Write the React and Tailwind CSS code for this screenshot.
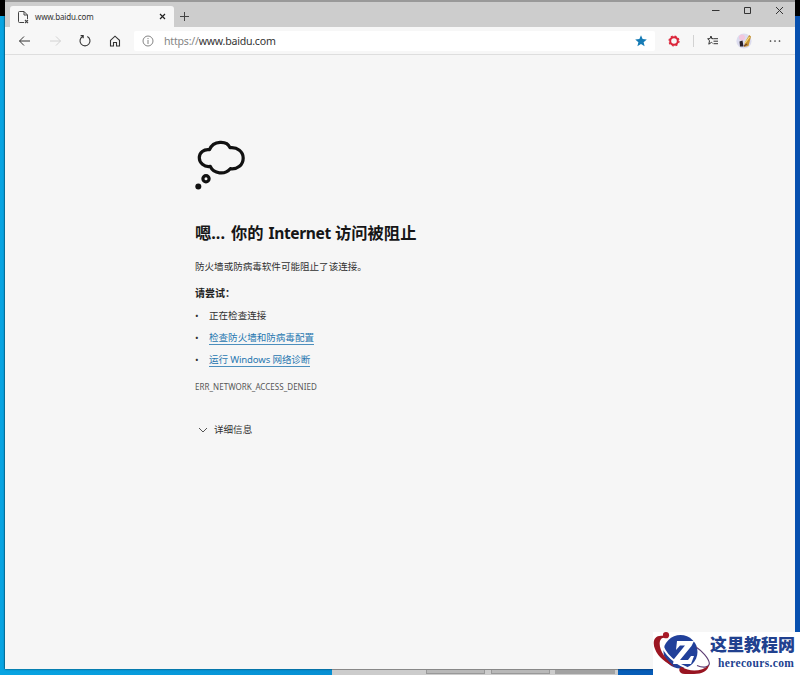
import React from "react";

const Stroke = ({ className, children, viewBox = "0 0 16 16", width = 1 }) => (
  <svg className={className} viewBox={viewBox} fill="none" stroke="currentColor" strokeWidth={width}>
    {children}
  </svg>
);

function TitleBar() {
  return (
    <div className="flex h-[27px] shrink-0 border-t-2 border-[#999] bg-[#cdcdcd] pl-[5px]">
      <div className="mt-[4px] flex h-[21px] w-[164px] items-center rounded-t-[3px] bg-[#f7f7f7]">
        <Stroke className="ml-[6px] h-[14px] w-[14px] text-[#444]" viewBox="0 0 14 14">
          <path d="M8 12.5H3.5Q2.5 12.5 2.5 11.5V2.5Q2.5 1.5 3.5 1.5H8L11.5 5V9M8 1.5V5H11.5" />
          <path d="M9 10L12 13M12 10L9 13" strokeWidth="1.1" />
        </Stroke>
        <span className="ml-[5px] w-[128px] text-[8px] leading-[12px] tracking-[-0.14px] text-[#333]">www.baidu.com</span>
        <Stroke className="-ml-[4px] h-[7px] w-[7px] shrink-0 text-[#222]" viewBox="0 0 7 7" width={1.2}>
          <path d="M1 1L6 6M6 1L1 6" />
        </Stroke>
      </div>
      <Stroke className="ml-[6px] mt-[10px] h-[10px] w-[10px] text-[#444]" viewBox="0 0 10 10">
        <path d="M4.5 0V9M0 4.5H9" />
      </Stroke>
      <div className="ml-auto flex gap-[23px] pr-[11px] pt-[4px] text-[#333]">
        <Stroke className="h-[9px] w-[9px]" viewBox="0 0 9 9"><path d="M1 4.5H8.5" /></Stroke>
        <Stroke className="h-[9px] w-[9px]" viewBox="0 0 9 9"><path d="M1.5 1.5H7.5V7.5H1.5Z" /></Stroke>
        <Stroke className="h-[9px] w-[9px]" viewBox="0 0 9 9"><path d="M1 1L8 8M8 1L1 8" /></Stroke>
      </div>
    </div>
  );
}

function Toolbar() {
  return (
    <div className="flex h-[28px] shrink-0 items-center border-b border-[#dedede] bg-[#f7f7f7] pl-[13px] text-[#333]">
      <Stroke className="h-[12px] w-[13px]" viewBox="0 0 13 12"><path d="M12 6H1.5M6 1.5L1.5 6L6 10.5" /></Stroke>
      <Stroke className="ml-[18px] h-[12px] w-[13px] text-[#d2d2d2]" viewBox="0 0 13 12"><path d="M1 6H11.5M7 1.5L11.5 6L7 10.5" /></Stroke>
      <Stroke className="ml-[16px] h-[14px] w-[14px]" viewBox="0 0 14 14" width={1.1}>
        <path d="M9.3 2.4A5 5 0 1 1 4.7 2.4M2.6 1.6H5.2V4.2" />
      </Stroke>
      <Stroke className="ml-[17px] h-[12px] w-[12px]" viewBox="0 0 12 12" width={1.1}>
        <path d="M1.5 5.3L6 1.2L10.5 5.3V11H7.5V7.5H4.5V11H1.5Z" />
      </Stroke>
      <div className="ml-[13px] flex h-[20px] w-[521px] items-center rounded-[2px] bg-white">
        <Stroke className="ml-[8px] h-[12px] w-[12px] text-[#777]" viewBox="0 0 12 12" width={0.9}>
          <circle cx="6" cy="6" r="5" /><path d="M6 5V9M6 3V4.1" />
        </Stroke>
        <span className="ml-[10px] text-[10.6px] leading-[14px] tracking-[-0.23px] text-[#858585]">
          https://<span className="text-[#333]">www.baidu.com</span>
        </span>
        <svg className="ml-auto mr-[8px] h-[12px] w-[12px]" viewBox="0 0 12 12">
          <path fill="#167bb5" d="M6 0.3L7.6 4.1L11.8 4.5L8.6 7.2L9.6 11.3L6 9.1L2.4 11.3L3.4 7.2L0.2 4.5L4.4 4.1Z" />
        </svg>
      </div>
      <svg className="ml-[13px] h-[12px] w-[12px]" viewBox="0 0 12 12" fill="none" stroke="#db2439">
        <circle cx="6" cy="6" r="3.8" strokeWidth="2" />
        <circle cx="6" cy="6" r="5" strokeWidth="1.2" strokeDasharray="2 1.93" />
      </svg>
      <div className="ml-[13px] h-[12px] w-px bg-[#d2d2d2]" />
      <Stroke className="ml-[13px] h-[11px] w-[12px]" viewBox="0 0 12 11">
        <path d="M6.5 3.7H4.8L3.9 1.2L3 3.7H0.7L2.5 5.8L1.8 9.2L4.4 7.4L5.6 8.2M6.5 3.7H11M6.5 6.2H11M6.5 8.7H11" />
        <path d="M3.9 1.2L5.2 3.7" />
      </Stroke>
      <svg className="ml-[17px] h-[16px] w-[16px]" viewBox="0 0 16 16">
        <circle cx="8" cy="8" r="7.6" fill="#dcdcef" />
        <circle cx="6" cy="4.5" r="3" fill="#f1c7de" />
        <path d="M3.5 8.5L6.5 7.5L7.5 13.5H4Z" fill="#26202c" />
        <path d="M8 14L9 9L13.2 2L15 3.5L12.5 13Z" fill="#c69332" />
        <path d="M9 10L13.5 4" stroke="#f7df80" strokeWidth="1.2" />
        <path d="M8 13L11 11" stroke="#76472b" strokeWidth="1.5" />
      </svg>
      <svg className="ml-[17px] h-[4px] w-[12px]" viewBox="0 0 12 4" fill="#333">
        <circle cx="1.5" cy="2" r=".85" /><circle cx="6" cy="2" r=".85" /><circle cx="10.5" cy="2" r=".85" />
      </svg>
    </div>
  );
}

function ErrorPage() {
  return (
    <main className="flex flex-1 flex-col items-start bg-[#f6f6f6] pl-[190px] pt-[84px] text-[9.55px] text-[#303030]">
      <svg className="h-[52px] w-[52px]" viewBox="0 0 52 52" fill="none" stroke="#111" strokeWidth="3.2">
        <path d="M14.5 10.7C18.2 1.2 32 1.2 35 8.7C42.5 7.8 48.2 12.8 48.2 18.9C48.2 26 42.5 30.5 35.3 29.7C30 36.1 18.5 35 15.3 27.4C9 28.3 4.3 23.8 4.3 18.8C4.3 13.5 8.8 9.9 14.5 10.7Z" strokeLinejoin="round" />
        <circle cx="11" cy="39.8" r="3.1" />
        <circle cx="3.3" cy="47.5" r="3" fill="#111" stroke="none" />
      </svg>
      <h1 className="mt-[30px] flex h-[24px] whitespace-nowrap text-[16.3px] font-bold leading-[24px] text-[#161616]">
        <span className="w-[36px]">嗯...</span>
        <span className="w-[37.5px]">你的</span>
        <span className="w-[66.5px] text-[15.6px] tracking-[-0.38px]">Internet</span>
        <span>访问被阻止</span>
      </h1>
      <p className="mt-[14px] h-[16px] whitespace-nowrap leading-[16px]">防火墙或防病毒软件可能阻止了该连接。</p>
      <h2 className="mt-[10px] h-[16px] text-[10px] font-bold leading-[16px] text-[#222]">请尝试：</h2>
      <ul className="mt-[4px]">
        <li className="flex h-[22px] items-center"><span className="w-[14px]">•</span><span className="leading-[14px]">正在检查连接</span></li>
        <li className="flex h-[22px] items-center"><span className="w-[14px]">•</span><a className="mt-px h-[13px] border-b border-[#4c8fbd] leading-[12px] text-[#2777b0]">检查防火墙和防病毒配置</a></li>
        <li className="flex h-[22px] items-center"><span className="w-[14px]">•</span><a className="mt-px h-[13px] border-b border-[#4c8fbd] leading-[12px] tracking-[-0.12px] text-[#2777b0]">运行 Windows 网络诊断</a></li>
      </ul>
      <p className="mt-[10px] h-[12px] text-[8px] leading-[12px] tracking-[0.03px] text-[#565656]">ERR_NETWORK_ACCESS_DENIED</p>
      <div className="mt-[29px] flex h-[16px] items-center">
        <Stroke className="ml-[3px] h-[6px] w-[10px] text-[#555]" viewBox="0 0 10 6"><path d="M1 1L5 5L9 1" /></Stroke>
        <span className="ml-[6px] leading-[18px]">详细信息</span>
      </div>
    </main>
  );
}

function Watermark() {
  return (
    <div className="absolute left-[653px] top-[632px] flex h-[43px] w-[147px] bg-white">
      <svg className="h-[43px] w-[57px] shrink-0" viewBox="0 0 57 43">
        <ellipse cx="27.5" cy="19.8" rx="17" ry="16.8" fill="#21409a" />
        <path d="M43 15C49 19 55.5 26 56.3 31C56.8 35 51 36.5 44 33.5" fill="none" stroke="#5c3d73" strokeWidth="1.1" />
        <path d="M8.5 7C8 17 17 29 34 36" fill="none" stroke="white" strokeWidth="2" />
        <path d="M24 9H41L38.5 14L27 28H35L38 24H41L38 32H20L21 27L32 13.5H27L23 18Z" fill="white" />
        <path d="M11 4C1 2-1 10 2 17C5 25 13 31 22 35C12 27 5 17 7 9C8 6 10 5 13 6Z" fill="#9c1622" />
        <circle cx="13" cy="3.2" r="3.1" fill="#a91927" />
        <path d="M29 35C36 40 49 40 56 33C55 39 49 42 41 42H32C25 42 25 35 29 35Z" fill="#981521" />
      </svg>
      <div className="flex flex-col whitespace-nowrap text-[#21418f]">
        <span className="mt-[3px] h-[22px] font-['Liberation_Serif','Noto_Sans_CJK_SC',serif] text-[17px] font-black leading-[22px]">这里教程网</span>
        <span className="ml-[8px] h-[13px] font-['Liberation_Serif',serif] text-[11.5px] font-bold leading-[13px] tracking-[0.35px]">herecours.com</span>
      </div>
    </div>
  );
}

export default function App() {
  return (
    <div className="relative flex h-[675px] w-[800px] flex-col overflow-hidden bg-[linear-gradient(90deg,#08a4e2_0%,#078fd3_42%,#075eb8_78%,#0750af_100%)] font-['Noto_Sans','Noto_Sans_CJK_SC',sans-serif]">
      <div className="flex h-[669px]">
        <div className="flex w-[5px] flex-col"><div className="h-[16px] bg-black" /><div className="flex-1 border-r border-[#078bc1]" /></div>
        <div className="flex w-[790px] flex-col shadow-[0_0_2px_rgba(0,0,0,0.65)]">
          <TitleBar />
          <Toolbar />
          <ErrorPage />
        </div>
        <div className="flex w-[5px] flex-col"><div className="h-[16px] bg-black" /><div className="flex-1 bg-[#0750af]" /></div>
      </div>
      <div className="ml-[332px] flex h-[6px] w-[286px] border-t border-[#888] bg-[#cccccc] pl-[94px]">
        <div className="h-[4px] w-[59px] border border-t-0 border-[#999] bg-[#b8b8b8]" />
        <div className="ml-[6px] h-[4px] w-[59px] border border-t-0 border-[#999] bg-[#b8b8b8]" />
        <div className="ml-[5px] h-[4px] w-[60px] bg-[#a2a2a2]" />
      </div>
      <Watermark />
    </div>
  );
}
